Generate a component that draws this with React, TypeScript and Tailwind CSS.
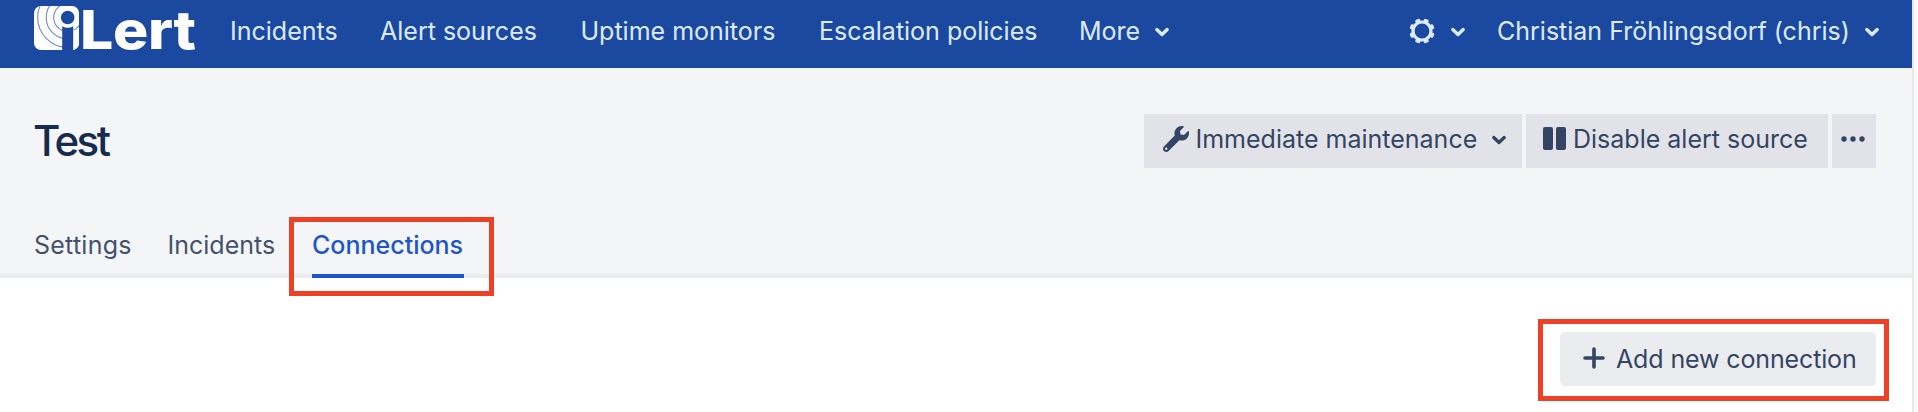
import React from "react";

function Chevron({ className }: { className: string }) {
  return (
    <svg viewBox="0 0 16 10" className={"h-[10px] w-[16px] shrink-0 " + className} fill="none" stroke="currentColor" strokeWidth="3.4" strokeLinecap="round" strokeLinejoin="round">
      <path d="M2.8 2.6 8 7.4l5.2-4.8" />
    </svg>
  );
}

function Logo() {
  return (
    <div className="flex h-[68px] w-[162px] shrink-0 items-start pt-[6px]">
      <svg viewBox="0 0 45 44" className="h-[44px] w-[45px] shrink-0">
        <defs>
          <clipPath id="badge"><rect width="45" height="44" rx="7" /></clipPath>
        </defs>
        <g clipPath="url(#badge)">
          <rect width="45" height="44" fill="#fff" />
          <g fill="none" stroke="#6f8cc6" strokeWidth="1.1">
            <circle cx="33.7" cy="11.5" r="14" />
            <circle cx="33.7" cy="11.5" r="21.5" />
            <circle cx="33.7" cy="11.5" r="30" />
          </g>
          <rect x="38" y="24" width="7" height="20" fill="#fff" />
          <circle cx="33.7" cy="11.5" r="6.8" fill="#1b499f" />
          <path d="M28.2 20.3q5.5 3 11 0V44h-11z" fill="#1b499f" />
        </g>
      </svg>
      <span className="ml-[0.5px] mt-[-4px] origin-left scale-x-[1.11] text-[53px] leading-[56px] font-extrabold tracking-[-0.3px] text-white">Lert</span>
    </div>
  );
}

function Gear() {
  return (
    <svg viewBox="-13 -13 26 26" className="h-[26px] w-[26px] shrink-0">
      <circle r="9" fill="none" stroke="currentColor" strokeWidth="3.2" />
      {[22.5, 67.5, 112.5, 157.5, 202.5, 247.5, 292.5, 337.5].map((a) => (
        <rect key={a} x="-2.5" y="-12.6" width="5" height="4" rx="1.3" fill="currentColor" transform={`rotate(${a})`} />
      ))}
    </svg>
  );
}

export default function App() {
  return (
    <div className="flex h-[412px] w-full bg-[#fafafa] font-['Inter',sans-serif] text-[25px] leading-[32px] whitespace-nowrap">
      <div className="flex w-[1912px] shrink-0 flex-col bg-white">
        <header className="flex h-[68px] shrink-0 items-center bg-[#1b499f] pl-[34px] text-[#deebff]">
          <Logo />
          <nav className="flex items-center pb-[6px]">
            <a className="ml-[34px] w-[150px]">Incidents</a>
            <a className="w-[200.5px]">Alert sources</a>
            <a className="w-[238.5px]">Uptime monitors</a>
            <a className="w-[260px]">Escalation policies</a>
            <a className="w-[75px]">More</a>
            <Chevron className="mt-[2px] ml-[-0.5px]" />
          </nav>
          <div className="ml-auto flex items-center pr-[32px] pb-[6px]">
            <Gear />
            <Chevron className="mt-[2px] ml-[15px]" />
            <a className="ml-[31px] w-[367px]">Christian Fröhlingsdorf (chris)</a>
            <Chevron className="mt-[2px]" />
          </div>
        </header>

        <section className="flex h-[210px] shrink-0 flex-col border-b-4 border-[#ebecf0] bg-[#f4f5f7]">
          <div className="flex h-[146px] shrink-0 items-start justify-between pl-[33px] pr-[36px] pt-[46px]">
            <h1 className="mt-[1px] text-[42px] leading-[52px] font-medium tracking-[-2.6px] text-[#172b4d]">Test</h1>
            <div className="flex gap-1 text-[#344563]">
              <button className="flex h-[54px] w-[378px] items-center bg-[#e2e3e9] pl-[19px]">
                <svg viewBox="0 0 512 512" className="mt-[-4px] h-[26px] w-[26px] shrink-0" fill="currentColor">
                  <path d="M507.73 109.1c-2.24-9.03-13.54-12.09-20.12-5.51l-74.36 74.36-67.88-11.31-11.31-67.88 74.36-74.36c6.62-6.62 3.43-17.9-5.66-20.16-47.38-11.74-99.55.91-136.58 37.93-39.64 39.64-50.55 97.1-34.05 147.2L18.74 402.76c-24.99 24.99-24.99 65.51 0 90.5 24.99 24.99 65.51 24.99 90.5 0l213.21-213.21c50.12 16.71 107.47 5.68 147.37-34.22 37.07-37.07 49.7-89.32 37.91-136.73zM64 472c-13.25 0-24-10.75-24-24 0-13.26 10.75-24 24-24s24 10.74 24 24c0 13.25-10.75 24-24 24z" />
                </svg>
                <span className="ml-[6.5px] w-[295.5px] pb-1 text-left">Immediate maintenance</span>
                <Chevron className="mt-[-2px]" />
              </button>
              <button className="flex h-[54px] w-[302px] items-center bg-[#e2e3e9] pl-[17px]">
                <svg viewBox="0 0 23 23" className="mt-[-5px] h-[23px] w-[23px] shrink-0" fill="currentColor">
                  <rect width="10" height="23" rx="2" /><rect x="13" width="10" height="23" rx="2" />
                </svg>
                <span className="ml-[7px] pb-1">Disable alert source</span>
              </button>
              <button className="flex h-[54px] w-[44px] items-center bg-[#e2e3e9] pl-[9px]">
                <svg viewBox="0 0 24 6" className="mt-[-4px] h-[6px] w-[24px]" fill="currentColor">
                  <circle cx="3" cy="3" r="2.7" /><circle cx="12" cy="3" r="2.7" /><circle cx="21" cy="3" r="2.7" />
                </svg>
              </button>
            </div>
          </div>
          <div className="flex h-[60px] shrink-0 items-start pl-[34px] text-[#42526e]">
            <a className="w-[133.5px] pt-[15px] tracking-[0.25px]">Settings</a>
            <a className="w-[121.5px] pt-[15px]">Incidents</a>
            <div className="mt-[3px] h-[79px] w-[205px] shrink-0 border-[5px] border-[#ee4026] pl-[18px] pt-[7px]">
              <a className="block h-[49px] w-[152px] border-b-4 border-[#1d56c9] font-medium text-[#1d56c9]">Connections</a>
            </div>
          </div>
        </section>

        <main className="flex justify-end pr-[23px] pt-[41px]">
          <div className="h-[82px] w-[351px] border-[5px] border-[#ee4026] pl-[17px] pt-[8px]">
            <button className="flex h-[54px] w-[316px] items-center rounded-[5px] bg-[#ebecf0] pl-[23px] text-[#344563]">
              <svg viewBox="0 0 22 22" className="mt-[-2px] h-[22px] w-[22px] shrink-0" fill="none" stroke="currentColor" strokeWidth="3.6" strokeLinecap="round">
                <path d="M2 11h18M11 2v18" />
              </svg>
              <span className="ml-[11px] tracking-[-0.13px]">Add new connection</span>
            </button>
          </div>
        </main>
      </div>
      <div className="w-[2px] shrink-0 bg-[#e8e8e8]" />
    </div>
  );
}
